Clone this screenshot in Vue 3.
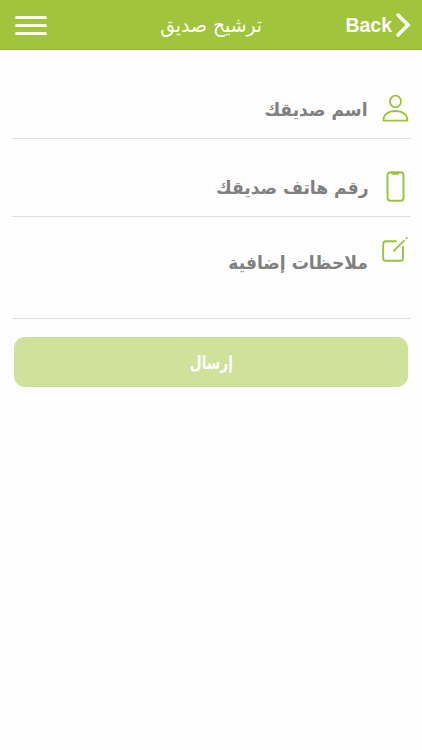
<template>
  <div class="page">
    <header class="navbar">
      <button class="menu-btn" aria-label="Menu">
        <span></span>
        <span></span>
        <span></span>
      </button>
      <h1 class="title" dir="rtl">ترشيح صديق</h1>
      <button class="back-btn">
        <span>Back</span>
        <svg viewBox="0 0 15 24" fill="none">
          <path d="M2 2 L12 12 L2 22" stroke="currentColor" stroke-width="3.6" stroke-linecap="round" />
        </svg>
      </button>
    </header>

    <form class="form" dir="rtl" @submit.prevent>
      <label v-for="field in fields" :key="field.id" :class="['field', field.id]">
        <svg v-if="field.id === 'name'" class="icon" viewBox="0 0 28 32">
          <ellipse cx="14.5" cy="8.5" rx="5.5" ry="5.9" />
          <path d="M2.4 27.6C2.4 21.4 7.4 18 14.4 18S26.4 21.4 26.4 27.6Z" stroke-linejoin="round" />
        </svg>
        <svg v-else-if="field.id === 'phone'" class="icon" viewBox="0 0 28 32">
          <rect x="6.5" y="1.2" width="16" height="28.6" rx="3" />
          <path class="notch" d="M10.5 1.5H18.5L17.5 3.2H11.5Z" />
        </svg>
        <svg v-else class="icon" viewBox="0 0 28 32">
          <path d="M15 6.3H4.8Q2.2 6.3 2.2 8.9V23.2Q2.2 25.8 4.8 25.8H19.4Q22 25.8 22 23.2V12" />
          <path d="M12.8 15.8L23 5.6M25.4 3.2L25.8 2.8" />
        </svg>
        <span class="label">{{ field.label }}</span>
      </label>
      <button class="submit"><span>إرسال</span></button>
    </form>
  </div>
</template>

<script setup>
const fields = [
  { id: 'name', label: 'اسم صديقك' },
  { id: 'phone', label: 'رقم هاتف صديقك' },
  { id: 'notes', label: 'ملاحظات إضافية' }
]
</script>

<style>
body {
  margin: 0;
  background: #fefefe;
}
</style>

<style scoped>
.page {
  height: 750px;
  overflow: hidden;
  background: #fefefe;
  font-family: "DejaVu Sans", sans-serif;
}

button {
  padding: 0;
  border: none;
  background: none;
  color: #fff;
}

.navbar {
  display: grid;
  grid-template-columns: 84px 1fr 84px;
  align-items: center;
  box-sizing: border-box;
  height: 50px;
  padding: 0 11px 0 15px;
  background: #a0c43c;
  border-bottom: 1px solid #98b846;
  color: #fff;
}

.menu-btn {
  display: flex;
  flex-direction: column;
  gap: 5px;
  width: 32px;
  padding-top: 2px;
}

.menu-btn span {
  height: 3px;
  border-radius: 2px;
  background: #fbfdee;
}

.title {
  margin: 0;
  padding: 1px 4px 0 0;
  font-size: 20px;
  font-weight: 400;
  line-height: 30px;
  text-align: center;
  white-space: nowrap;
  transform: scaleX(0.94);
}

.back-btn {
  display: flex;
  align-items: center;
  justify-content: flex-end;
  gap: 4px;
  font: bold 19.5px "Liberation Sans", sans-serif;
}

.back-btn span {
  padding-top: 2px;
}

.back-btn svg {
  width: 15px;
  height: 24px;
}

.form {
  padding: 11px 11px 0 12px;
}

.field {
  display: flex;
  align-items: center;
  gap: 13px;
  box-sizing: border-box;
  height: 78px;
  padding: 18px 2px 0 0;
  border-bottom: 1px solid #dedee0;
}

.field.notes {
  align-items: flex-start;
  height: 102px;
}

.icon {
  flex: none;
  width: 28px;
  height: 32px;
  fill: none;
  stroke: #9dc243;
  stroke-width: 1.9;
  stroke-linecap: round;
}

.icon .notch {
  fill: #9dc243;
  stroke-width: 1;
}

.label {
  padding-top: 2px;
  color: #808080;
  font-size: 18px;
  font-weight: 700;
  line-height: 26px;
  white-space: nowrap;
  /* slightly condensed lettering */
  transform: scaleX(0.95);
  transform-origin: right center;
}

.notes .label {
  padding-top: 15px;
}

.submit {
  display: flex;
  align-items: center;
  justify-content: center;
  width: calc(100% - 5px);
  height: 50px;
  margin: 18px 3px 0 2px;
  border-radius: 11px;
  background: #d0e19c;
  font: bold 18px "DejaVu Sans", sans-serif;
}

.submit span {
  transform: scaleX(0.76);
}
</style>
